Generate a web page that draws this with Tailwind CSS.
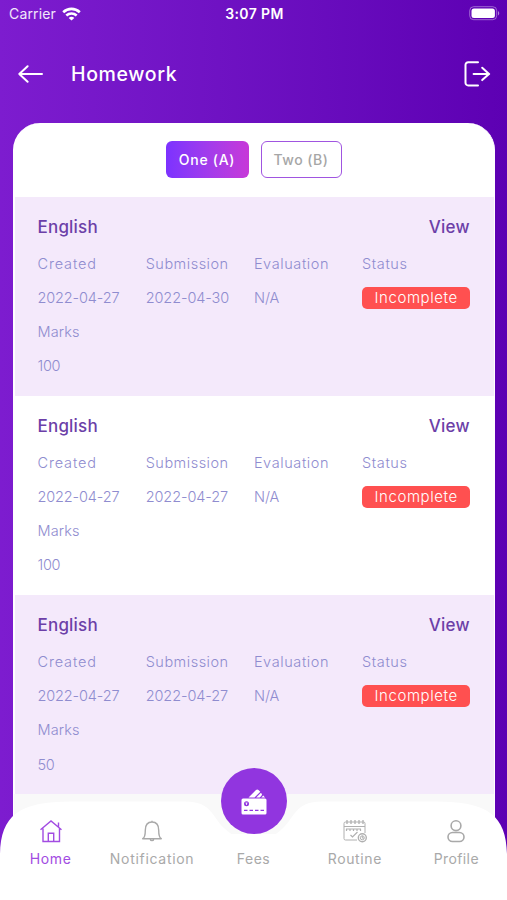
<!DOCTYPE html>
<html lang="en">
<head>
<meta charset="utf-8">
<title>Homework</title>
<script src="https://cdn.jsdelivr.net/npm/@tailwindcss/browser@4"></script>
</head>
<body class="font-['Inter','Liberation_Sans',sans-serif]">
<div class="relative flex h-[900px] w-[507px] flex-col overflow-hidden bg-linear-to-r from-[#7d1ccf] to-[#5d00b3]">
  <div class="grid h-[27px] grid-cols-3 items-center pl-[9px] pr-[7px] text-white">
    <div class="flex items-center gap-[6px] text-[14px] tracking-[0.15px] text-white/90">Carrier
      <svg class="h-[14px] w-[19px]" viewBox="0 0 19 14" fill="none" stroke="#fff" stroke-width="2.6"><path d="M1.2 5.2C6 .7 13 .7 17.8 5.2M4.3 8.5c3-2.700 7.400-2.700 10.400 0"/><path d="M9.500 13.600 6.700 10.900c1.600-1.400 4-1.400 5.600 0z" fill="#fff" stroke="none"/></svg>
    </div>
    <div class="text-center text-[14px] font-semibold tracking-[0.4px]">3:07 PM</div>
    <svg class="h-[15px] w-[31px] justify-self-end" viewBox="0 0 31 15"><rect x=".7" y=".7" width="27" height="13" rx="4" fill="none" stroke="#fff" stroke-opacity=".4"/><rect x="2.500" y="2.500" width="23.400" height="9.400" rx="2.500" fill="#fff"/><path d="M29 5c1.700.8 1.700 3.600 0 4.400z" fill="#fff" fill-opacity=".5"/></svg>
  </div>
  <header class="flex h-[96px] items-center pl-[18px] pr-[16px] text-white">
    <svg class="h-5 w-[25px]" viewBox="0 0 25 20" fill="none" stroke="#fff" stroke-width="2" stroke-linecap="round" stroke-linejoin="round"><path d="M24 9H1.300M9.600 1.200 1.300 9l8.300 7.800"/></svg>
    <h1 class="ml-[28px] flex-1 text-[19.5px] font-medium leading-none tracking-[0.65px]">Homework</h1>
    <svg class="mb-[2px] h-[26px] w-[27px]" viewBox="0 0 27 26" fill="none" stroke="#fff" stroke-width="2" stroke-linecap="round" stroke-linejoin="round"><path d="M14 1.200H4.200a2.700 2.700 0 0 0-2.700 2.700v17.800a2.700 2.700 0 0 0 2.700 2.700H14M9.600 12.900h15.600M18.200 6.700l6.800 6.200-6.800 6.200"/></svg>
  </header>
  <main class="ml-[13px] w-[482px] flex-1 overflow-hidden rounded-t-[27px] border-l-2 border-r border-white bg-white">
    <div class="flex h-[73.5px] items-center justify-center gap-3 pr-[2px] text-[14px] font-medium">
      <div class="flex h-[37px] w-[83px] items-center justify-center rounded-[6px] bg-linear-to-r from-[#7c32ff] to-[#c738d8] tracking-[0.7px] text-white">One (A)</div>
      <div class="flex h-[37px] w-[81px] items-center justify-center rounded-[6px] border-[1.5px] border-[#a055e0] tracking-[0.5px] text-[#a6a6a6]">Two (B)</div>
    </div>
    <div id="list"></div>
  </main>
  <nav class="absolute inset-x-0 bottom-0 h-[106px]">
    <svg class="absolute inset-0 h-[106px] w-[507px]" viewBox="0 0 507 106"><path d="M14 0H494V40H14z" fill="#f9f9f9"/><path d="M0 106V60C1 22 18 7.500 72 7.500H185C212 7.500 212 23 224 34C232 42 241 46 253.500 46S275 42 283 34C295 23 295 7.500 322 7.500H435C489 7.500 506 22 507 60V106z" fill="#fff"/></svg>
    <div class="absolute left-[220.500px] top-[-26px] flex h-[66px] w-[66px] items-center justify-center rounded-full bg-[#9135df]">
      <svg class="h-[27px] w-[26px]" viewBox="0 0 26 27"><path d="M7.500 9.600 15 2c.8-.8 1.700-.8 2.500 0l1.800 1.800-5.800 5.800zM15.200 9.600l4.500-4.500c2 1 1.200 2.200.5 2.900l-1.500 1.600zM20.300 9.600l2-2.200 1.700 2.200z" fill="#fff"/><rect x=".5" y="10.500" width="25" height="16" rx="1.500" fill="#fff"/><circle cx="5.500" cy="15.800" r="2.500" fill="#9135df"/><path d="M4.500 15h2M5.500 15v2" stroke="#fff" stroke-width=".8"/><path d="M3 22.300h20" stroke="#9135df" stroke-width="1.300" stroke-dasharray="3.500 2"/></svg>
    </div>
    <div class="relative grid grid-cols-5 pt-[25px] text-center text-[14px] leading-5 text-[#a9a9a9]">
      <div class="flex flex-col items-center gap-[6px] tracking-[0.7px] text-[#a24ce2]">
        <svg class="h-6 w-6" viewBox="0 0 24 24" fill="none" stroke="#a24ce2" stroke-width="1.400"><path d="M1.500 10.800 12 2l10.500 8.800M4 9.500v13h16.500v-13M9.300 22.500v-8.300h5.400v8.300M19.500 8V3.500"/></svg>Home</div>
      <div class="flex flex-col items-center gap-[6px] whitespace-nowrap tracking-[0.7px]">
        <svg class="h-6 w-6" viewBox="0 0 24 24" fill="none" stroke="#a9a9a9" stroke-width="1.400" stroke-linejoin="round"><path d="M2.700 19.700c2.300-1.200 2.600-4 2.600-8.500C5.300 6.500 7.500 3 12 3s6.700 3.500 6.700 8.200c0 4.500.3 7.300 2.600 8.500zM10.300 20.500c.4 1.500 3 1.500 3.400 0M12 3V1.800"/></svg>Notification</div>
      <div class="pt-[30px] tracking-[0.5px]">Fees</div>
      <div class="flex flex-col items-center gap-[6px] tracking-[0.65px]">
        <svg class="h-6 w-6" viewBox="0 0 24 24" fill="none" stroke="#b0b0b0" stroke-width="1"><path d="M14 21H2.500a1.500 1.500 0 0 1-1.500-1.500V4.500A1.500 1.500 0 0 1 2.500 3h18A1.500 1.500 0 0 1 22 4.500V14M1 7.500h21"/><path d="M4 1v4M8 1v4M12 1v4M16 1v4M20 1v4" stroke-width="1.300"/><path d="M3 10h15M3.500 10v2M7 10v2M10.500 10v2M14 10v2M17.500 10v2M7.500 16l2 2 5-5" stroke-width="1.200"/><circle cx="19.300" cy="18.800" r="4" stroke-width="1.400"/><path d="M19.300 16.700v2.400h1.700"/><circle cx="19.300" cy="18.800" r="2"/></svg>Routine</div>
      <div class="flex flex-col items-center gap-[6px] tracking-[0.4px]">
        <svg class="h-6 w-6" viewBox="0 0 24 24" fill="none" stroke="#a9a9a9" stroke-width="1.600"><circle cx="12" cy="6.700" r="4.900"/><rect x="4" y="13.500" width="16" height="9" rx="4.500"/></svg>Profile</div>
    </div>
  </nav>
</div>
<script>
const items = [["2022-04-27", "2022-04-30", "100"], ["2022-04-27", "2022-04-27", "100"], ["2022-04-27", "2022-04-27", "50"]];
document.getElementById("list").innerHTML = items.map(([created, submission, marks]) => `
  <section class="h-[199.200px] pl-[22.500px] pr-[24px] odd:bg-[#f4e9fb] even:bg-white">
    <div class="flex h-[50px] items-end justify-between pb-[8px] text-[17px] font-medium leading-6 text-[#6c3fa8]"><span class="tracking-[0.2px]">English</span><span class="tracking-[0.3px]">View</span></div>
    <div class="grid auto-rows-[34.200px] grid-cols-[repeat(4,108.200px)] items-center text-[14.500px] font-light text-[#8f8ccf]">
      <span class="tracking-[0.850px]">Created</span><span class="tracking-[0.500px]">Submission</span><span class="tracking-[0.600px]">Evaluation</span><span class="tracking-[0.600px]">Status</span>
      <span class="tracking-[-0.150px]">${created}</span><span class="tracking-[-0.100px]">${submission}</span><span>N/A</span>
      <span class="flex h-[22px] items-center justify-center rounded-[5px] bg-[#ff5050] text-[15px] tracking-[0.600px] text-white">Incomplete</span>
      <span class="col-span-4 tracking-[0.100px]">Marks</span>
      <span class="col-span-4 tracking-[-0.300px]">${marks}</span>
    </div>
  </section>`).join("");
</script>
</body>
</html>
